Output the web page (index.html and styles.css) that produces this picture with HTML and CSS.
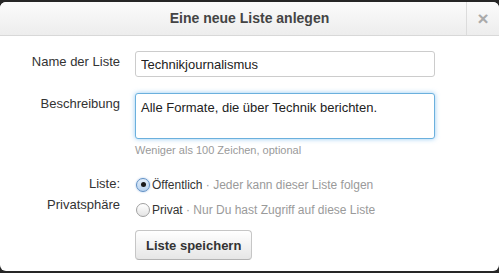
FILE: index.html
```html
<!doctype html>
<html lang="de">
<head>
    <meta charset="UTF-8">
    <title>Eine neue Liste anlegen</title>
    <link rel="stylesheet" href="styles.css">
</head>
<body>
    <div class="dialog">
        <div class="head">
            <span></span>
            <h3 class="title">Eine neue Liste anlegen</h3>
            <button class="close">&times;</button>
        </div>
        <form class="body">
            <label class="lbl">Name der Liste</label>
            <div class="ctl">
                <input class="txt" type="text" value="Technikjournalismus">
            </div>

            <label class="lbl">Beschreibung</label>
            <div class="ctl">
                <textarea class="area">Alle Formate, die über Technik berichten.</textarea>
                <p class="help">Weniger als 100 Zeichen, optional</p>
            </div>

            <label class="lbl lbl-two">Liste:<br>Privatsphäre</label>
            <div class="ctl">
                <ul class="radios">
                    <li><span class="dot on"></span><span><b>Öffentlich</b><i> · Jeder kann dieser Liste folgen</i></span></li>
                    <li><span class="dot"></span><span><b>Privat</b><i> · Nur Du hast Zugriff auf diese Liste</i></span></li>
                </ul>
                <button class="btn" type="button">Liste speichern</button>
            </div>
        </form>
    </div>
</body>
</html>
```

FILE: styles.css
```css
*{
    margin: 0;
    padding: 0;
    list-style: none;
    box-sizing: border-box;
}
html,body{
    height: 100%;
}
body{
    background: #262626;
    padding-top: 2px;
    font-family: "Liberation Sans", Arial, sans-serif;
    font-size: 13px;
    color: #333;
}
.dialog{
    width: 499px;
    height: 269px;
    background: #fff;
    border-radius: 6px;
    overflow: hidden;
}
.head{
    display: grid;
    grid-template-columns: 33px 1fr 33px;
    height: 34px;
    background: linear-gradient(#fbfbfb, #ededed);
    border-bottom: 1px solid #d8d8d8;
}
.title{
    text-align: center;
    font-size: 14px;
    line-height: 33px;
    color: #444;
}
.close{
    border: 0;
    border-left: 1px solid #dcdcdc;
    background: transparent;
    color: #aaa;
    font-family: "Liberation Sans", Arial, sans-serif;
    font-size: 19px;
    font-weight: bold;
    line-height: 30px;
}
.body{
    display: grid;
    grid-template-columns: 120px 300px;
    column-gap: 15px;
    row-gap: 16px;
    padding-top: 15px;
}
.lbl{
    text-align: right;
    line-height: 16px;
    padding-top: 3px;
}
.lbl-two{
    line-height: 21px;
    padding-top: 0;
}
.txt,.area{
    display: block;
    width: 300px;
    border: 1px solid #ccc;
    border-radius: 3px;
    font-family: "Liberation Sans", Arial, sans-serif;
    font-size: 13px;
    color: #222;
    line-height: 18px;
    outline: none;
}
.txt{
    height: 26px;
    padding: 3px 5px;
}
.area{
    height: 46px;
    padding: 5px 5px;
    resize: none;
    border-color: #6bb0dd;
    box-shadow: 0 0 5px rgba(82,168,236,.6);
}
.help{
    margin-top: 4px;
    font-size: 11px;
    line-height: 14px;
    color: #9a9a9a;
}
.radios{
    margin-top: -1px;
}
.radios>li{
    display: flex;
    align-items: center;
    height: 25px;
    font-size: 12px;
    white-space: pre;
}
.radios b{
    font-weight: normal;
    color: #333;
}
.radios i{
    font-style: normal;
    color: #9a9a9a;
}
.dot{
    width: 14px;
    height: 14px;
    margin: 0 2px 0 1px;
    border: 1px solid #a0a0a0;
    border-radius: 50%;
    background: linear-gradient(#fff, #e4e4e4);
    display: flex;
    align-items: center;
    justify-content: center;
}
.dot.on{
    border-color: #5f8fc4;
    background: linear-gradient(#e3eefa, #b9d3ef);
    box-shadow: 0 0 2px rgba(80,140,210,.6);
}
.dot.on::after{
    content: "";
    width: 5px;
    height: 5px;
    border-radius: 50%;
    background: #1a1a1a;
}
.btn{
    margin-top: 8px;
    height: 30px;
    padding: 0 10px;
    border: 1px solid #c6c6c6;
    border-bottom-color: #b3b3b3;
    border-radius: 4px;
    background: linear-gradient(#fff, #e6e6e6);
    font-family: "Liberation Sans", Arial, sans-serif;
    font-size: 13px;
    font-weight: bold;
    color: #333;
}
```
